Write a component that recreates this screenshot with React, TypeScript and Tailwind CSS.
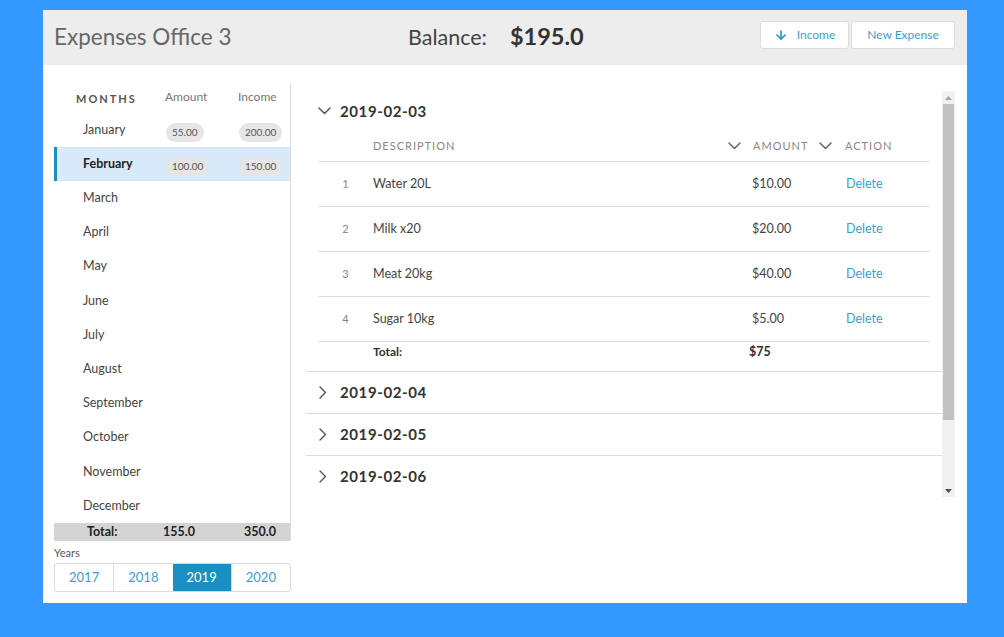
import React from 'react';
import { ArrowDown } from 'lucide-react';

const months = [
  'January', 'February', 'March', 'April', 'May', 'June',
  'July', 'August', 'September', 'October', 'November', 'December',
];

const badges: Record<string, [string, string]> = {
  January: ['55.00', '200.00'],
  February: ['100.00', '150.00'],
};

const expenses = [
  { id: 1, desc: 'Water 20L', amount: '$10.00' },
  { id: 2, desc: 'Milk x20', amount: '$20.00' },
  { id: 3, desc: 'Meat 20kg', amount: '$40.00' },
  { id: 4, desc: 'Sugar 10kg', amount: '$5.00' },
];

// thin chevron, drawn so its width can be set exactly
function Chevron({ dir, className }: { dir: 'down' | 'right'; className?: string }) {
  if (dir === 'down') {
    return (
      <svg width="13" height="8" viewBox="0 0 13 8" className={className}>
        <polyline points="1,1 6.5,6.5 12,1" fill="none" stroke="currentColor" strokeWidth="1.5" strokeLinecap="round" strokeLinejoin="round" />
      </svg>
    );
  }
  return (
    <svg width="8" height="13" viewBox="0 0 8 13" className={className}>
      <polyline points="1,1 6.5,6.5 1,12" fill="none" stroke="currentColor" strokeWidth="1.4" strokeLinecap="round" strokeLinejoin="round" />
    </svg>
  );
}

function Badge({ value }: { value: string }) {
  return (
    <span className="inline-flex h-[19px] items-center rounded-full bg-[#e6e6e6] px-[6px] text-[10px] text-[#555]">
      {value}
    </span>
  );
}

function MonthsPanel() {
  return (
    <div className="flex w-[237px] flex-col pt-[18px]">
      <div className="border-r border-[#dedede]">
        <div className="flex h-[30px] items-center">
          <div className="w-[108px] pl-[22px] pt-[2px] text-[11px] font-bold tracking-[2px] text-[#555]">MONTHS</div>
          <div className="w-[73px] pl-[3px] text-[12px] text-[#777] -mt-[2px]">Amount</div>
          <div className="pl-[3px] text-[12px] text-[#777] -mt-[2px]">Income</div>
        </div>
        {months.map((m) => {
          const active = m === 'February';
          const b = badges[m];
          return (
            <div
              key={m}
              className={
                active
                  ? 'flex h-[34.2px] items-center border-l-[3px] border-[#1a8fc2] bg-[#d8eafa]'
                  : 'flex h-[34.2px] items-center border-l-[3px] border-transparent'
              }
            >
              <div
                className={
                  active
                    ? 'w-[105px] pl-[26px] text-[12.5px] font-bold text-[#222]'
                    : 'w-[105px] pl-[26px] text-[12.5px] text-[#444]'
                }
              >
                {m}
              </div>
              <div className="w-[73px] pl-[4px]">{b && <Badge value={b[0]} />}</div>
              <div className="pl-[4px]">{b && <Badge value={b[1]} />}</div>
            </div>
          );
        })}
        <div className="flex h-[18px] items-center bg-[#d4d4d4] text-[12.5px] font-bold text-[#222]">
          <div className="w-[108px] pl-[33px]">Total:</div>
          <div className="w-[73px] pl-[1px]">155.0</div>
          <div className="pl-[9px]">350.0</div>
        </div>
      </div>
      <div className="mt-[4px] text-[11px] text-[#555]">Years</div>
      <div className="mt-[1px] flex h-[29px] overflow-hidden rounded-[3px] border border-[#dadada]">
        {['2017', '2018', '2019', '2020'].map((y, i) => (
          <div
            key={y}
            className={
              y === '2019'
                ? 'flex flex-1 items-center justify-center bg-[#1a8fc2] text-[13px] text-white'
                : i === 0
                  ? 'flex flex-1 items-center justify-center text-[13px] text-[#3a9fd0]'
                  : 'flex flex-1 items-center justify-center border-l border-[#dadada] text-[13px] text-[#3a9fd0]'
            }
          >
            {y}
          </div>
        ))}
      </div>
    </div>
  );
}

function DayHeader({ date, open }: { date: string; open?: boolean }) {
  return (
    <div className={open ? 'flex h-[40px] items-center pl-[12px]' : 'flex h-[41px] items-center pl-[13px]'}>
      {open ? (
        <Chevron dir="down" className="text-[#555]" />
      ) : (
        <Chevron dir="right" className="text-[#555]" />
      )}
      <span
        className={
          open
            ? 'ml-[9px] text-[15px] font-bold tracking-[0.6px] text-[#333]'
            : 'ml-[13px] text-[15px] font-bold tracking-[0.6px] text-[#333]'
        }
      >
        {date}
      </span>
    </div>
  );
}

function ExpenseTable() {
  return (
    <div className="px-[12px]">
      <div className="flex h-[31px] items-center border-b border-[#dcdcdc] text-[11px] tracking-[1px] text-[#888]">
        <div className="w-[55px]" />
        <div className="flex w-[375px] items-center justify-between pr-[7px]">
          <span>DESCRIPTION</span>
          <Chevron dir="down" className="text-[#666]" />
        </div>
        <div className="flex w-[92px] items-center justify-between pl-[5px] pr-[8px]">
          <span>AMOUNT</span>
          <Chevron dir="down" className="text-[#666]" />
        </div>
        <div className="pl-[5px]">ACTION</div>
      </div>
      {expenses.map((e) => (
        <div key={e.id} className="flex h-[45px] items-center border-b border-[#dcdcdc]">
          <div className="w-[55px] text-center text-[11px] text-[#888]">{e.id}</div>
          <div className="w-[375px] text-[12.5px] text-[#444]">{e.desc}</div>
          <div className="w-[92px] pl-[4px] text-[12.5px] text-[#444]">{e.amount}</div>
          <div className="pl-[6px] text-[12.5px] text-[#3a9fd0]">Delete</div>
        </div>
      ))}
      <div className="flex h-[29px] items-start pt-[1px] text-[12.5px] font-bold text-[#333]">
        <div className="w-[55px]" />
        <div className="w-[376px] text-[12px]">Total:</div>
        <div>$75</div>
      </div>
    </div>
  );
}

function Scrollbar() {
  return (
    <div className="flex h-[406px] w-[13px] flex-col bg-[#f1f1f1]">
      <div className="flex h-[13px] items-center justify-center">
        <svg width="7" height="4" viewBox="0 0 7 4"><path d="M0 4 L3.5 0 L7 4 Z" fill="#a3a3a3" /></svg>
      </div>
      <div className="mx-[1px] h-[316px] bg-[#c1c1c1]" />
      <div className="flex-1" />
      <div className="flex h-[13px] items-center justify-center">
        <svg width="7" height="4" viewBox="0 0 7 4"><path d="M0 0 L3.5 4 L7 0 Z" fill="#505050" /></svg>
      </div>
    </div>
  );
}

function ExpensesPanel() {
  return (
    <div className="ml-[15px] flex w-[649px] items-start pt-[26px]">
      <div className="h-[406px] flex-1 overflow-hidden">
        <div className="border-b border-[#dcdcdc]">
          <DayHeader date="2019-02-03" open />
          <ExpenseTable />
        </div>
        {['2019-02-04', '2019-02-05', '2019-02-06'].map((d) => (
          <div key={d} className="border-b border-[#dcdcdc]">
            <DayHeader date={d} />
          </div>
        ))}
      </div>
      <Scrollbar />
    </div>
  );
}

export default function App() {
  return (
    <div className="h-[637px] w-full bg-[#3399ff] pl-[43px] pt-[10px] font-['Lato',sans-serif]">
      <div className="h-[593px] w-[924px] bg-white">
        <div className="flex h-[55px] items-center bg-[#ededed] pl-[11px] pr-[12px]">
          <div className="w-[354px] pb-[1px] text-[22.5px] text-[#666]">Expenses Office 3</div>
          <div className="flex items-baseline pb-[1px]">
            <span className="text-[21.5px] text-[#444]">Balance:</span>
            <span className="ml-[23px] text-[23.5px] font-bold text-[#333]">$195.0</span>
          </div>
          <div className="mb-[5px] ml-auto flex gap-[2px]">
            <button className="flex h-[28px] w-[89px] items-center justify-center gap-[9px] rounded-[3px] border border-[#dcdcdc] bg-white text-[12px] text-[#3a9fd0]">
              <ArrowDown className="h-[14px] w-[14px] text-[#1a8fc2]" strokeWidth={2.6} />
              Income
            </button>
            <button className="flex h-[28px] w-[104px] items-center justify-center rounded-[3px] border border-[#dcdcdc] bg-white text-[12px] text-[#3a9fd0]">
              New Expense
            </button>
          </div>
        </div>
        <div className="flex items-start pl-[11px]">
          <MonthsPanel />
          <ExpensesPanel />
        </div>
      </div>
    </div>
  );
}
